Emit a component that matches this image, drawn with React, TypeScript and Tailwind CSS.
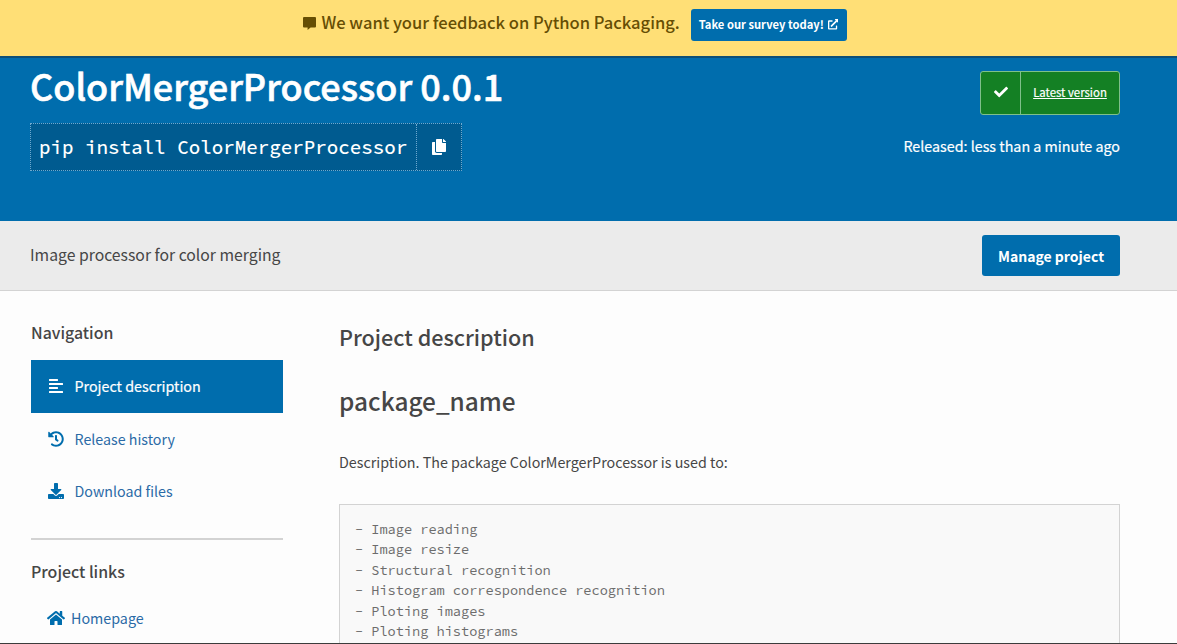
import type { ReactNode } from "react";
import {
  FaAlignLeft,
  FaCheck,
  FaCopy,
  FaDownload,
  FaExternalLinkAlt,
  FaHistory,
  FaHome,
} from "react-icons/fa";

function CommentIcon() {
  return (
    <svg viewBox="0 0 13 13" className="h-[13px] w-[13px]" fill="currentColor" aria-hidden="true">
      <path d="M1 0h11a1 1 0 0 1 1 1v8.6a1 1 0 0 1-1 1H7.6L4.6 13v-2.4H1a1 1 0 0 1-1-1V1a1 1 0 0 1 1-1z" />
    </svg>
  );
}

function NavItem({ icon, label, active = false }: { icon: ReactNode; label: string; active?: boolean }) {
  return (
    <a
      href="#"
      className={
        active
          ? "flex h-[53px] items-center bg-[#006dad] pl-[17px] text-[14.3px] text-white [-webkit-text-stroke:0.2px]"
          : "flex h-[52px] items-center pl-[17px] text-[14.25px] text-[#2a6aa6]"
      }
    >
      <span className={active ? "flex w-[26.5px] pb-px text-[16px]" : "flex w-[26.5px] text-[16px] text-[#006dad]"}>
        {icon}
      </span>
      {label}
    </a>
  );
}

const features = [
  "Image reading",
  "Image resize",
  "Structural recognition",
  "Histogram correspondence recognition",
  "Ploting images",
  "Ploting histograms",
];

export default function App() {
  return (
    <div className="flex h-[644px] w-[1177px] flex-col overflow-hidden border-b border-[#3c3c3c] bg-[#fdfdfd] font-['Noto_Sans_CJK_SC',sans-serif] leading-none text-[#464646]">
      <div className="flex h-14 shrink-0 items-start justify-center bg-[#ffdf76] pr-7 text-[#664e04]">
        <div className="mt-[17px] flex">
          <CommentIcon />
        </div>
        <p className="mt-[12px] ml-[6px] w-[369px] text-[16.55px] leading-5 font-medium whitespace-nowrap">
          We want your feedback on Python Packaging.
        </p>
        <a
          href="#"
          className="mt-[9px] flex h-8 w-[156px] items-center justify-center gap-1 rounded-[3px] bg-[#006dad] text-[11.2px] font-bold whitespace-nowrap text-white"
        >
          Take our survey today!
          <FaExternalLinkAlt className="mb-px text-[10.5px]" />
        </a>
      </div>

      <header className="flex h-[165px] shrink-0 justify-between border-t-2 border-[#0d5078] bg-[#006dad] pr-[57px] pl-[30px] text-white">
        <div>
          <h1 className="mt-[6px] h-[59px] text-[36px] leading-[42px] font-medium whitespace-nowrap [-webkit-text-stroke:0.6px]">
            ColorMergerProcessor 0.0.1
          </h1>
          <div className="flex h-12 w-[432px] border border-dotted border-[#6fa9cf] bg-[#005b90]">
            <code className="flex w-[386px] items-center border-r border-dotted border-[#6fa9cf] pt-0.5 pl-2 font-['Source_Code_Pro','Liberation_Mono',monospace] text-[19.2px] font-medium">
              pip install ColorMergerProcessor
            </code>
            <button className="flex flex-1 items-center justify-center" aria-label="Copy">
              <FaCopy className="text-[16px]" />
            </button>
          </div>
        </div>
        <div className="flex flex-col items-end">
          <a
            href="#"
            className="mt-[13px] flex h-11 w-[140px] rounded-[3px] border border-[#7fc08a] bg-[#148024] text-[11.4px] underline [-webkit-text-stroke:0.2px]"
          >
            <span className="flex w-10 items-center justify-center border-r border-[#7fc08a] pb-[2px] text-[14px]">
              <FaCheck />
            </span>
            <span className="flex flex-1 items-center justify-center">Latest version</span>
          </a>
          <p className="mt-[21px] text-[14.3px] leading-5 [-webkit-text-stroke:0.2px]">
            Released: less than a minute ago
          </p>
        </div>
      </header>

      <section className="flex h-[70px] shrink-0 items-center justify-between border-b border-[#d3d3d3] bg-[#ebebeb] pr-[57px] pl-[30px]">
        <p className="pb-0.5 text-[15.75px]">Image processor for color merging</p>
        <a
          href="#"
          className="flex h-[41px] w-[138px] items-center justify-center rounded-[3px] bg-[#006dad] text-[14px] font-bold text-white"
        >
          Manage project
        </a>
      </section>

      <main className="flex flex-1 gap-14 pl-[31px]">
        <aside className="w-[252px]">
          <h2 className="mt-8 h-[37px] text-[15.9px] leading-5 font-medium">Navigation</h2>
          <nav>
            <NavItem icon={<FaAlignLeft />} label="Project description" active />
            <NavItem icon={<FaHistory />} label="Release history" />
            <NavItem icon={<FaDownload />} label="Download files" />
          </nav>
          <div className="mt-[21px] border-t-2 border-[#d3d3d3] pt-[22px]">
            <h2 className="text-[15.9px] leading-5 font-medium">Project links</h2>
            <a href="#" className="mt-[26px] flex items-center pl-4 text-[14.3px] leading-5 text-[#2a6aa6]">
              <FaHome className="mr-[6px] text-[18px] text-[#006dad]" />
              Homepage
            </a>
          </div>
        </aside>
        <article className="w-[781px]">
          <h2 className="mt-[31px] text-[21.6px] leading-[30px] font-medium">Project description</h2>
          <h1 className="mt-[34px] text-[24.4px] leading-[30px] font-medium">package_name</h1>
          <p className="mt-9 text-[14.3px] leading-5">
            Description. The package ColorMergerProcessor is used to:
          </p>
          <pre className="mt-8 h-[160px] border border-[#d3d3d3] bg-[#f9f9f9] px-[15px] pt-[15px] font-['Source_Code_Pro','Liberation_Mono',monospace] text-[13.6px] leading-[20.4px] text-[#6c6c6c]">
            {features.map((f) => "- " + f).join("\n")}
          </pre>
        </article>
      </main>
    </div>
  );
}
